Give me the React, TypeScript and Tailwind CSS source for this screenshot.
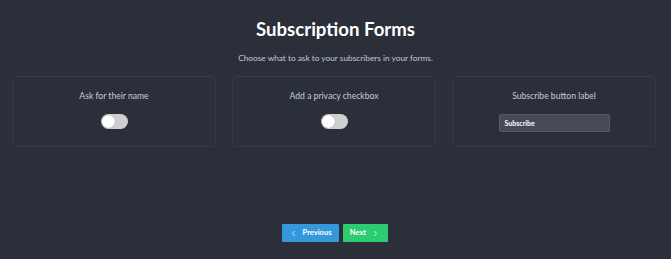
import { ChevronLeft, ChevronRight } from "lucide-react";

const font = { fontFamily: 'Lato, "Noto Sans", sans-serif' };

function Toggle() {
  return (
    <div className="flex h-[15px] w-[27px] items-center rounded-full bg-[#cfcfcf] px-[1px]">
      <div className="h-[13px] w-[13px] rounded-full bg-white shadow-[0_0_1px_rgba(0,0,0,0.4)]" />
    </div>
  );
}

function Card({ label, children }: { label: string; children: React.ReactNode }) {
  return (
    <div className="flex h-[71px] w-[204px] flex-col items-center rounded-[4px] border border-[#353a46] pt-[13px]">
      <div className="text-[8.6px] leading-[12px] text-[#c5ccd6]">{label}</div>
      <div className="mt-[12px]">{children}</div>
    </div>
  );
}

export default function App() {
  return (
    <div className="h-[259px] w-[671px] bg-[#2a2f3a]" style={font}>
      <div className="flex flex-col items-center pt-[15px]">
        <h1 className="text-[18.6px] font-bold leading-[28px] text-white">Subscription Forms</h1>
        <p className="mt-[9px] text-[8.3px] leading-[12px] text-[#c5cad3]">
          Choose what to ask to your subscribers in your forms.
        </p>
      </div>
      <div className="mt-[12px] flex gap-[16px] pl-[12px]">
        <Card label="Ask for their name">
          <Toggle />
        </Card>
        <Card label="Add a privacy checkbox">
          <Toggle />
        </Card>
        <Card label="Subscribe button label">
          <div className="flex h-[18px] w-[111px] items-center rounded-[2px] border border-[#565b67] bg-[#464a56] px-[5px] text-[7px] font-bold text-white">
            Subscribe
          </div>
        </Card>
      </div>
      <div className="mt-[77px] flex justify-center gap-[4px] pr-[2px]">
        <button className="flex h-[18px] w-[57px] items-center justify-center gap-[5px] rounded-[1px] bg-[#3498db] text-[7.5px] font-bold text-white">
          <ChevronLeft size={9} strokeWidth={2} />
          Previous
        </button>
        <button className="flex h-[18px] w-[45px] items-center justify-center gap-[5px] rounded-[1px] bg-[#2ecc71] text-[7.5px] font-bold text-white">
          Next
          <ChevronRight size={9} strokeWidth={2} />
        </button>
      </div>
    </div>
  );
}
